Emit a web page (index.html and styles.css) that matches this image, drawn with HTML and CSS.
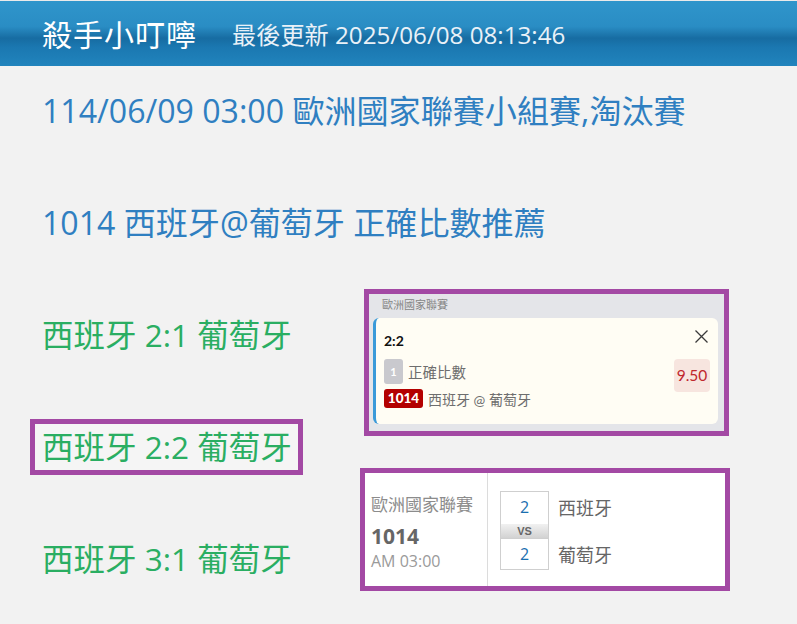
FILE: index.html
```html
<!DOCTYPE html>
<html lang="zh-Hant">
<head>
<meta charset="utf-8">
<title>殺手小叮嚀</title>
<link rel="stylesheet" href="styles.css">
</head>
<body>
<header class="topbar">
  <h1 class="brand">殺手小叮嚀</h1>
  <span class="updated">最後更新 2025/06/08 08:13:46</span>
</header>
<main class="content">
  <h2 class="headline">114/06/09 03:00 歐洲國家聯賽小組賽,淘汰賽</h2>
  <h2 class="headline spaced">1014 西班牙@葡萄牙 正確比數推薦</h2>
  <div class="split">
    <div class="scores">
      <p class="score">西班牙 2:1 葡萄牙</p>
      <p class="score picked"><span class="pick-box">西班牙 2:2 葡萄牙</span></p>
      <p class="score">西班牙 3:1 葡萄牙</p>
    </div>
    <div class="cards">
      <section class="bet-card">
        <div class="bet-league">歐洲國家聯賽</div>
        <div class="bet-item">
          <button class="close" aria-label="close">
            <svg width="13" height="13" viewBox="0 0 13 13"><path d="M0.5 0.5 L12.5 12.5 M12.5 0.5 L0.5 12.5" stroke="#3a3a3a" stroke-width="1.3" fill="none"/></svg>
          </button>
          <div class="bet-grid">
            <div class="bet-score">2:2</div>
            <div class="bet-row"><span class="num-badge">1</span><span class="bet-type">正確比數</span></div>
            <div class="odds">9.50</div>
            <div class="bet-row"><span class="game-badge">1014</span><span class="bet-teams">西班牙 @ 葡萄牙</span></div>
          </div>
        </div>
      </section>
      <section class="match-card">
        <div class="match-info">
          <div class="match-league">歐洲國家聯賽</div>
          <div class="match-no">1014</div>
          <div class="match-time">AM 03:00</div>
        </div>
        <div class="match-board">
          <div class="goal">2</div>
          <div class="team">西班牙</div>
          <div class="vs">VS</div>
          <div class="goal">2</div>
          <div class="team">葡萄牙</div>
        </div>
      </section>
    </div>
  </div>
</main>
</body>
</html>
```
FILE: styles.css
```css
* { box-sizing: border-box; }
html, body { margin: 0; padding: 0; }
body {
  background: #f2f2f2;
  font-family: "Open Sans", "Noto Sans CJK TC", sans-serif;
  width: 797px;
  height: 624px;
  overflow: hidden;
}
.topbar {
  height: 66px;
  display: flex;
  align-items: center;
  padding: 0 0 0 42px;
  background: linear-gradient(#eaeaea 0, #eaeaea 1px, #2f95cb 1px, #2a8dc4 40%, #176ca2 58%, #1b78b1 72%, #2184bd 100%);
}
.brand {
  margin: 0;
  font-family: "Noto Sans CJK TC", sans-serif;
  font-weight: 400;
  font-size: 30px;
  line-height: 40px;
  color: #ffffff;
  letter-spacing: 1px;
}
.updated {
  margin: 4px 0 0 35px;
  font-size: 24.2px;
  line-height: 30px;
  color: #e9f1f8;
}
.content {
  padding: 25px 0 0 42px;
}
.headline {
  margin: 0;
  font-weight: 400;
  font-size: 32.1px;
  line-height: 40px;
  color: #2f7fc1;
  white-space: nowrap;
}
.spaced { margin-top: 72px; }
.split {
  display: flex;
  margin-top: 46px;
}
.scores {
  width: 318px;
  padding-top: 26px;
  display: flex;
  flex-direction: column;
  gap: 72px;
}
.score {
  margin: 0;
  font-size: 31.5px;
  line-height: 40px;
  color: #2aae62;
  white-space: nowrap;
}
.picked { margin: -8px 0; }
.pick-box {
  display: inline-block;
  margin-left: -12px;
  padding: 3px 6px 3px 7px;
  border: 5px solid #a349a4;
  background: #f5f5f5;
}
.cards {
  display: flex;
  flex-direction: column;
}
.bet-card {
  margin-left: 4px;
  width: 365px;
  height: 147px;
  border: 5px solid #a349a4;
  background: #e4e5e9;
  font-family: "Lato", "Noto Sans CJK TC", sans-serif;
}
.bet-league {
  padding: 3px 0 0 13px;
  height: 24px;
  font-family: "Noto Sans CJK TC", sans-serif;
  font-size: 11px;
  line-height: 14px;
  color: #858585;
}
.bet-item {
  position: relative;
  margin: 0 6px 0 4px;
  height: 106px;
  background: #fffdf4;
  border-left: 3px solid #3a9ad9;
  border-radius: 6px;
  padding: 14px 8px 0 8px;
}
.close {
  position: absolute;
  top: 12px;
  right: 10px;
  width: 13px;
  height: 13px;
  padding: 0;
  border: 0;
  background: none;
  display: block;
}
.close svg { display: block; }
.bet-grid {
  display: grid;
  grid-template-columns: 1fr auto;
  grid-template-rows: 27px 30px 19px;
}
.bet-score {
  grid-column: 1 / 3;
  font-weight: 700;
  font-size: 14px;
  line-height: 18px;
  color: #111;
}
.bet-row {
  display: flex;
  align-items: center;
  height: 25px;
}
.bet-row:last-child { height: 19px; }
.num-badge {
  width: 19px;
  height: 25px;
  border-radius: 3px;
  background: #c9c9ce;
  color: #fff;
  font-weight: 700;
  font-size: 11px;
  line-height: 25px;
  text-align: center;
}
.bet-type {
  margin-left: 5px;
  font-family: "Noto Sans CJK TC", sans-serif;
  font-size: 14.5px;
  color: #6e6e6e;
}
.game-badge {
  width: 39px;
  height: 19px;
  border-radius: 3px;
  background: #b30000;
  color: #fff;
  font-weight: 900;
  font-size: 13.5px;
  line-height: 19px;
  text-align: center;
}
.bet-teams {
  margin-left: 5px;
  font-family: "Lato", "Noto Sans CJK TC", sans-serif;
  font-size: 14px;
  color: #6e6e6e;
}
.odds {
  grid-column: 2;
  grid-row: 2 / 4;
  align-self: start;
  width: 36px;
  height: 33px;
  border-radius: 4px;
  background: #f7e5df;
  color: #c0272d;
  font-size: 15.5px;
  line-height: 33px;
  text-align: center;
}
.match-card {
  margin-top: 32px;
  width: 370px;
  height: 123px;
  border: 5px solid #a349a4;
  background: #ffffff;
  display: flex;
}
.match-info {
  width: 123px;
  border-right: 1px solid #dcdcdc;
  padding: 21px 0 0 6px;
}
.match-league {
  font-family: "Noto Sans CJK TC", sans-serif;
  font-size: 17px;
  line-height: 20px;
  color: #8c8c8c;
  white-space: nowrap;
}
.match-no {
  margin-top: 10px;
  font-weight: 700;
  font-size: 21px;
  line-height: 24px;
  color: #666;
}
.match-time {
  margin-top: 3px;
  font-size: 16px;
  line-height: 20px;
  color: #9a9a9a;
}
.match-board {
  padding: 18px 0 0 12px;
  display: grid;
  grid-template-columns: 49px auto;
  grid-template-rows: 33px 14px 32px;
  column-gap: 9px;
  align-content: start;
}
.goal {
  border: 1px solid #cfcfcf;
  color: #1a6fb0;
  font-size: 16px;
  line-height: 30px;
  text-align: center;
}
.goal:first-child { border-bottom: 0; }
.vs {
  grid-column: 1;
  background: linear-gradient(#f1f1f1, #d2d2d2);
  border-left: 1px solid #cfcfcf;
  border-right: 1px solid #cfcfcf;
  font-family: "Liberation Sans", sans-serif;
  font-weight: 700;
  font-size: 11px;
  line-height: 14px;
  color: #666;
  text-align: center;
}
.vs + .goal { border-top: 1px solid #cfcfcf; grid-column: 1; }
.team {
  font-family: "Noto Sans CJK TC", sans-serif;
  font-size: 18px;
  line-height: 33px;
  color: #666;
}
.match-board .team:last-child { grid-row: 3; grid-column: 2; }
```
